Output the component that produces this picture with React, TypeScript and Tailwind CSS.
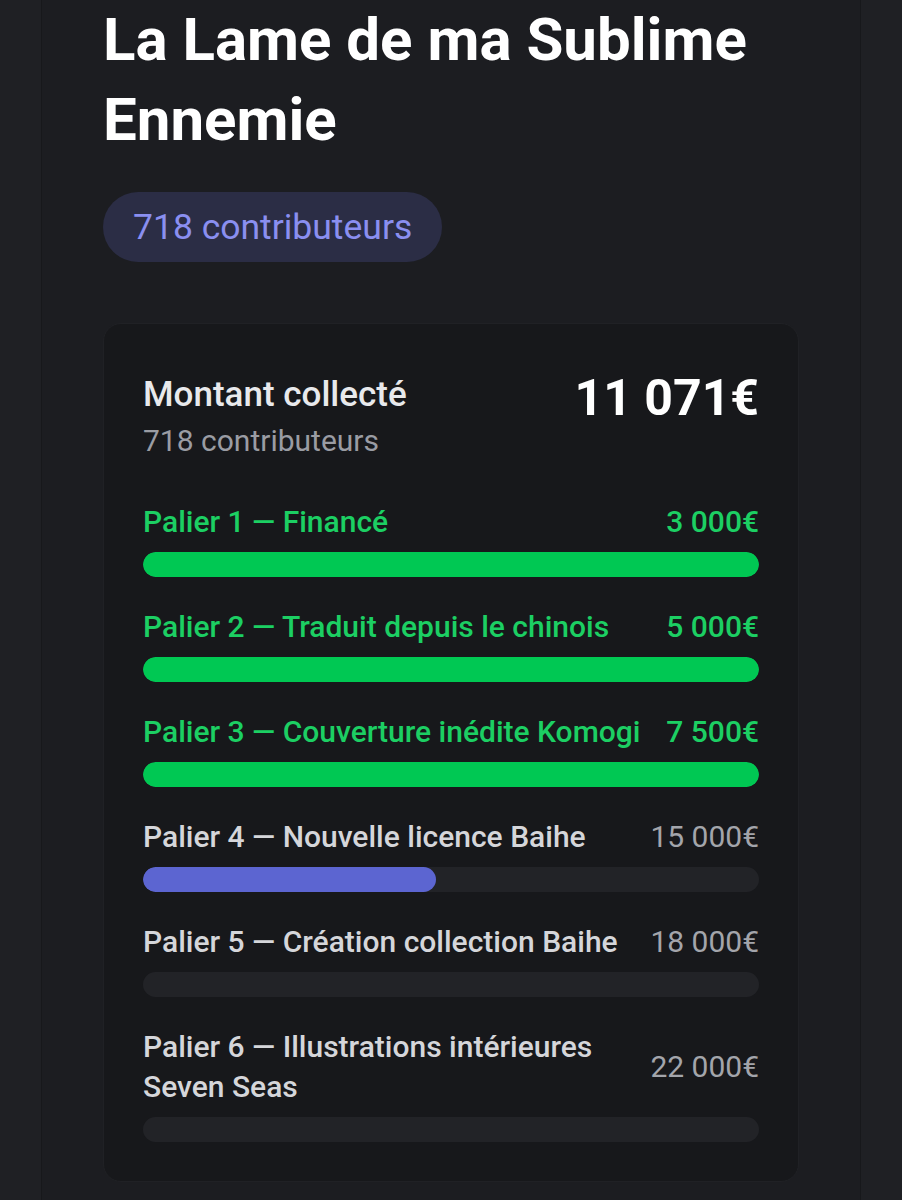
type Tier = {
  label: string;
  amount: string;
  goal: number;
};

const raised = 11071;

const tiers: Tier[] = [
  { label: "Palier 1 — Financé", amount: "3 000€", goal: 3000 },
  { label: "Palier 2 — Traduit depuis le chinois", amount: "5 000€", goal: 5000 },
  { label: "Palier 3 — Couverture inédite Komogi", amount: "7 500€", goal: 7500 },
  { label: "Palier 4 — Nouvelle licence Baihe", amount: "15 000€", goal: 15000 },
  { label: "Palier 5 — Création collection Baihe", amount: "18 000€", goal: 18000 },
  { label: "Palier 6 — Illustrations intérieures Seven Seas", amount: "22 000€", goal: 22000 },
];

const TierRow = ({ tier, prev }: { tier: Tier; prev: number }) => {
  const done = raised >= tier.goal;
  const active = !done && raised > prev;
  const pct = done ? 100 : active ? ((raised - prev) / (tier.goal - prev)) * 100 : 0;

  return (
    <div>
      <div className="flex items-center justify-between gap-[18px] text-[30px] leading-[40px]">
        <p className={done ? "font-medium text-[#1ccf63]" : "font-medium text-[#d5d6da]"}>
          {tier.label}
        </p>
        <span className={done ? "shrink-0 font-medium text-[#1ccf63]" : "shrink-0 text-[#a3a5ab]"}>
          {tier.amount}
        </span>
      </div>
      <div className="mt-[10px] h-[25px] w-full overflow-hidden rounded-full bg-[#222327]">
        <div
          className={done ? "h-full rounded-full bg-[#00c853]" : "h-full rounded-full bg-[#5c65d1]"}
          style={{ width: `${pct}%` }}
        />
      </div>
    </div>
  );
};

export default function App() {
  return (
    <div
      className="flex min-h-screen justify-center bg-[#1f2024]"
      style={{ fontFamily: "Roboto, 'Noto Sans', sans-serif" }}
    >
      <div className="w-[820px] border-x border-[#17181b] bg-[#1c1d21] px-[61px] pb-10">
        <h1 className="text-[60px] font-bold leading-[80px] text-white">
          La Lame de ma Sublime Ennemie
        </h1>

        <div className="mt-[32px] inline-flex rounded-full bg-[#2b2d45] px-[30px] py-[10px] text-[35.5px] leading-[50px] text-[#8a8ff0]">
          718 contributeurs
        </div>

        <section className="mt-[61px] rounded-[18px] border border-[#202125] bg-[#17181b] px-[39px] pt-[44px] pb-[39px]">
          <div className="flex items-start justify-between">
            <div className="pt-[6px]">
              <h2 className="text-[35px] font-medium leading-[42px] text-[#e8e9ec]">
                Montant collecté
              </h2>
              <p className="mt-[5px] text-[30px] leading-[40px] text-[#9a9ca3]">718 contributeurs</p>
            </div>
            <span className="text-[50px] font-bold leading-[60px] text-white">11 071€</span>
          </div>

          <div className="mt-[41px] flex flex-col gap-[30px]">
            {tiers.map((tier, i) => (
              <TierRow key={tier.label} tier={tier} prev={i === 0 ? 0 : tiers[i - 1].goal} />
            ))}
          </div>
        </section>
      </div>
    </div>
  );
}
